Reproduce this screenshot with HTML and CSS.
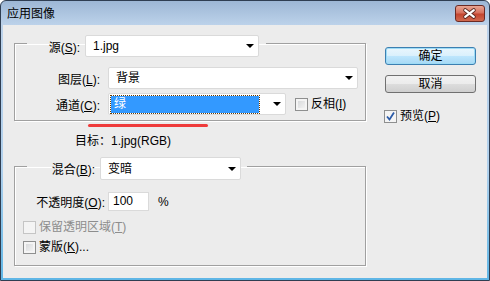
FILE: index.html
```html
<!DOCTYPE html>
<html lang="zh-CN">
<head>
    <meta charset="UTF-8">
    <meta name="viewport" content="width=device-width, initial-scale=1.0">
    <title>应用图像</title>
    <link rel="stylesheet" href="styles.css">
</head>
<body>
    <div class="window">
        <div class="titlebar">
            <span class="title">应用图像</span>
            <span class="close">
                <svg width="30" height="17" viewBox="0 0 30 17">
                    <path d="M10.5 5 L19.5 12 M19.5 5 L10.5 12" stroke="#5b2a22" stroke-width="4" stroke-linecap="round" fill="none"/>
                    <path d="M10.5 5 L19.5 12 M19.5 5 L10.5 12" stroke="#ffffff" stroke-width="2.2" stroke-linecap="round" fill="none"/>
                </svg>
            </span>
        </div>

        <div class="client">
            <div class="main">
                <fieldset class="group group-source">
                    <legend class="legend legend-source">
                        <span class="label label-source">源(<u>S</u>):</span>
                        <span class="combo combo-source"><span class="combo-value">1.jpg</span><span class="arrow"></span></span>
                    </legend>
                    <div class="row row-layer">
                        <span class="label label-wide">图层(<u>L</u>):</span>
                        <span class="combo combo-layer"><span class="combo-value">背景</span><span class="arrow"></span></span>
                    </div>
                    <div class="row row-channel">
                        <span class="label label-wide">通道(<u>C</u>):</span>
                        <span class="combo combo-channel"><span class="combo-value selected">绿</span><span class="arrow"></span></span>
                        <span class="check check-invert"><span class="box"></span>反相(<u>I</u>)</span>
                    </div>
                </fieldset>

                <div class="mark"></div>
                <div class="target">目标：1.jpg(RGB)</div>

                <fieldset class="group group-blend">
                    <legend class="legend legend-blend">
                        <span class="label label-blend">混合(<u>B</u>):</span>
                        <span class="combo combo-blend"><span class="combo-value">变暗</span><span class="arrow"></span></span>
                    </legend>
                    <div class="row row-opacity">
                        <span class="label label-opacity">不透明度(<u>O</u>):</span>
                        <span class="field">100</span>
                        <span class="unit">%</span>
                    </div>
                    <div class="check check-row check-keep disabled"><span class="box"></span>保留透明区域(<u>T</u>)</div>
                    <div class="check check-row check-mask"><span class="box"></span>蒙版(<u>K</u>)...</div>
                </fieldset>
            </div>

            <div class="side">
                <div class="button button-default">确定</div>
                <div class="button">取消</div>
                <div class="check check-preview">
                    <span class="box checked">
                        <svg width="11" height="11" viewBox="0 0 11 11">
                            <path d="M2 5.5 L4.5 8.5 L9 1.5" stroke="#2b5ba8" stroke-width="1.8" fill="none"/>
                        </svg>
                    </span>预览(<u>P</u>)
                </div>
            </div>
        </div>
    </div>
</body>
</html>
```

FILE: styles.css
```css
body {
    margin: 0;
    background: #ffffff;
    font-family: "Liberation Sans", "Noto Sans CJK SC", sans-serif;
    font-size: 12px;
    color: #000000;
}

.window {
    width: 490px;
    height: 281px;
    box-sizing: border-box;
    border: 1px solid #2f3e52;
    border-radius: 6px 6px 0 0;
    background: linear-gradient(to bottom, #9db7d5 0, #bcd2ea 24px, #b0d0ec 60%, #5fb6e6 100%);
    overflow: hidden;
}

.titlebar {
    height: 24px;
    display: flex;
    align-items: flex-start;
    justify-content: space-between;
}

.title {
    padding: 5px 0 0 6px;
    line-height: 16px;
}

.close {
    margin: 4px 4px 0 0;
    width: 30px;
    height: 17px;
    box-sizing: border-box;
    border: 1px solid #6b2a24;
    border-radius: 3px;
    background: linear-gradient(to bottom, #e9a694 0, #d7715e 45%, #c4452f 55%, #d0694f 100%);
    display: flex;
}

.close svg {
    margin: -1px 0 0 -1px;
}

.client {
    margin: 0 2px;
    height: 253px;
    background: #ececec;
    display: flex;
    padding: 4px 0 0 11px;
    box-sizing: border-box;
}

.main {
    width: 352px;
}

.group {
    margin: 0;
    padding: 0;
    border: 1px solid #a0a0a0;
    box-shadow: inset 1px 1px 0 #ffffff, 1px 1px 0 #ffffff;
    min-inline-size: 0;
}

.legend {
    display: flex;
    align-items: center;
    margin-left: 12px;
}

.legend-source {
    padding: 6px 7px 0 0;
}

.legend-blend {
    padding: 5px 6px 0 0;
}

.label {
    text-align: right;
    white-space: nowrap;
}

.label-source {
    width: 53px;
    margin-right: 5px;
}

.label-wide {
    width: 73px;
    margin-right: 8px;
}

.label-blend {
    width: 68px;
    margin-right: 5px;
}

.label-opacity {
    width: 90px;
    margin-right: 3px;
}

.combo {
    display: flex;
    align-items: center;
    height: 22px;
    box-sizing: border-box;
    background: #ffffff;
    border: 1px solid #dadada;
    border-radius: 2px;
}

.combo-value {
    flex: 1;
    padding-left: 7px;
    line-height: 16px;
}

.arrow {
    width: 0;
    height: 0;
    border-left: 4px solid transparent;
    border-right: 4px solid transparent;
    border-top: 4px solid #000000;
    margin-right: 4px;
}

.combo-source {
    width: 174px;
}

.combo-layer {
    width: 250px;
}

.combo-channel {
    width: 178px;
}

.combo-blend {
    width: 141px;
    height: 23px;
}

.combo-value.selected {
    margin: 1px 14px 0 2px;
    padding-left: 3px;
    height: 17px;
    background: #3399ff;
    color: #ffffff;
    outline: 1px dotted #6a3b00;
}

.row {
    display: flex;
    align-items: center;
    margin-left: 12px;
}

.row-layer {
    margin-top: 10px;
}

.row-channel {
    margin-top: 4px;
    margin-bottom: 5px;
}

.check {
    display: flex;
    align-items: center;
    white-space: nowrap;
    line-height: 16px;
}

.box {
    width: 13px;
    height: 13px;
    box-sizing: border-box;
    border: 1px solid #8e8f8f;
    background: linear-gradient(135deg, #d2d4d6, #f8f8f8);
    box-shadow: inset 0 0 0 2px #f4f4f4;
    margin-right: 3px;
    display: flex;
    align-items: center;
    justify-content: center;
}

.box.checked {
    background: #f4f4f4;
    box-shadow: none;
}

.check-invert {
    margin-left: 9px;
}

.mark {
    margin: 3px 0 0 74px;
    width: 120px;
    height: 3px;
    border-radius: 2px;
    background: #ef3b3b;
}

.target {
    margin: 7px 0 4px 61px;
    line-height: 14px;
}

.row-opacity {
    margin: 12px 0 0 0;
}

.field {
    width: 41px;
    height: 19px;
    box-sizing: border-box;
    background: #ffffff;
    border: 1px solid #dadada;
    padding-left: 4px;
    line-height: 17px;
}

.unit {
    margin-left: 9px;
}

.check-row {
    margin-left: 8px;
}

.check-keep {
    margin-top: 8px;
}

.check-mask {
    margin-top: 4px;
    margin-bottom: 10px;
}

.disabled {
    color: #8d8d8d;
}

.disabled .box {
    border-color: #c5c5c5;
    background: #f4f4f4;
    box-shadow: none;
}

.side {
    margin: 18px 0 0 19px;
    width: 91px;
}

.button {
    height: 18px;
    box-sizing: border-box;
    border: 1px solid #707070;
    border-radius: 3px;
    background: linear-gradient(to bottom, #f2f2f2 0, #ebebeb 50%, #dddddd 50%, #cfcfcf 100%);
    text-align: center;
    line-height: 16px;
    margin-bottom: 10px;
}

.button-default {
    border-color: #3c7fb1;
    box-shadow: inset 0 0 0 1px #9edcf6;
    background: linear-gradient(to bottom, #eaf6fd 0, #d9f0fc 50%, #bee6fd 50%, #a7d9f5 100%);
}

.check-preview {
    margin: 15px 0 0 -1px;
}
```
